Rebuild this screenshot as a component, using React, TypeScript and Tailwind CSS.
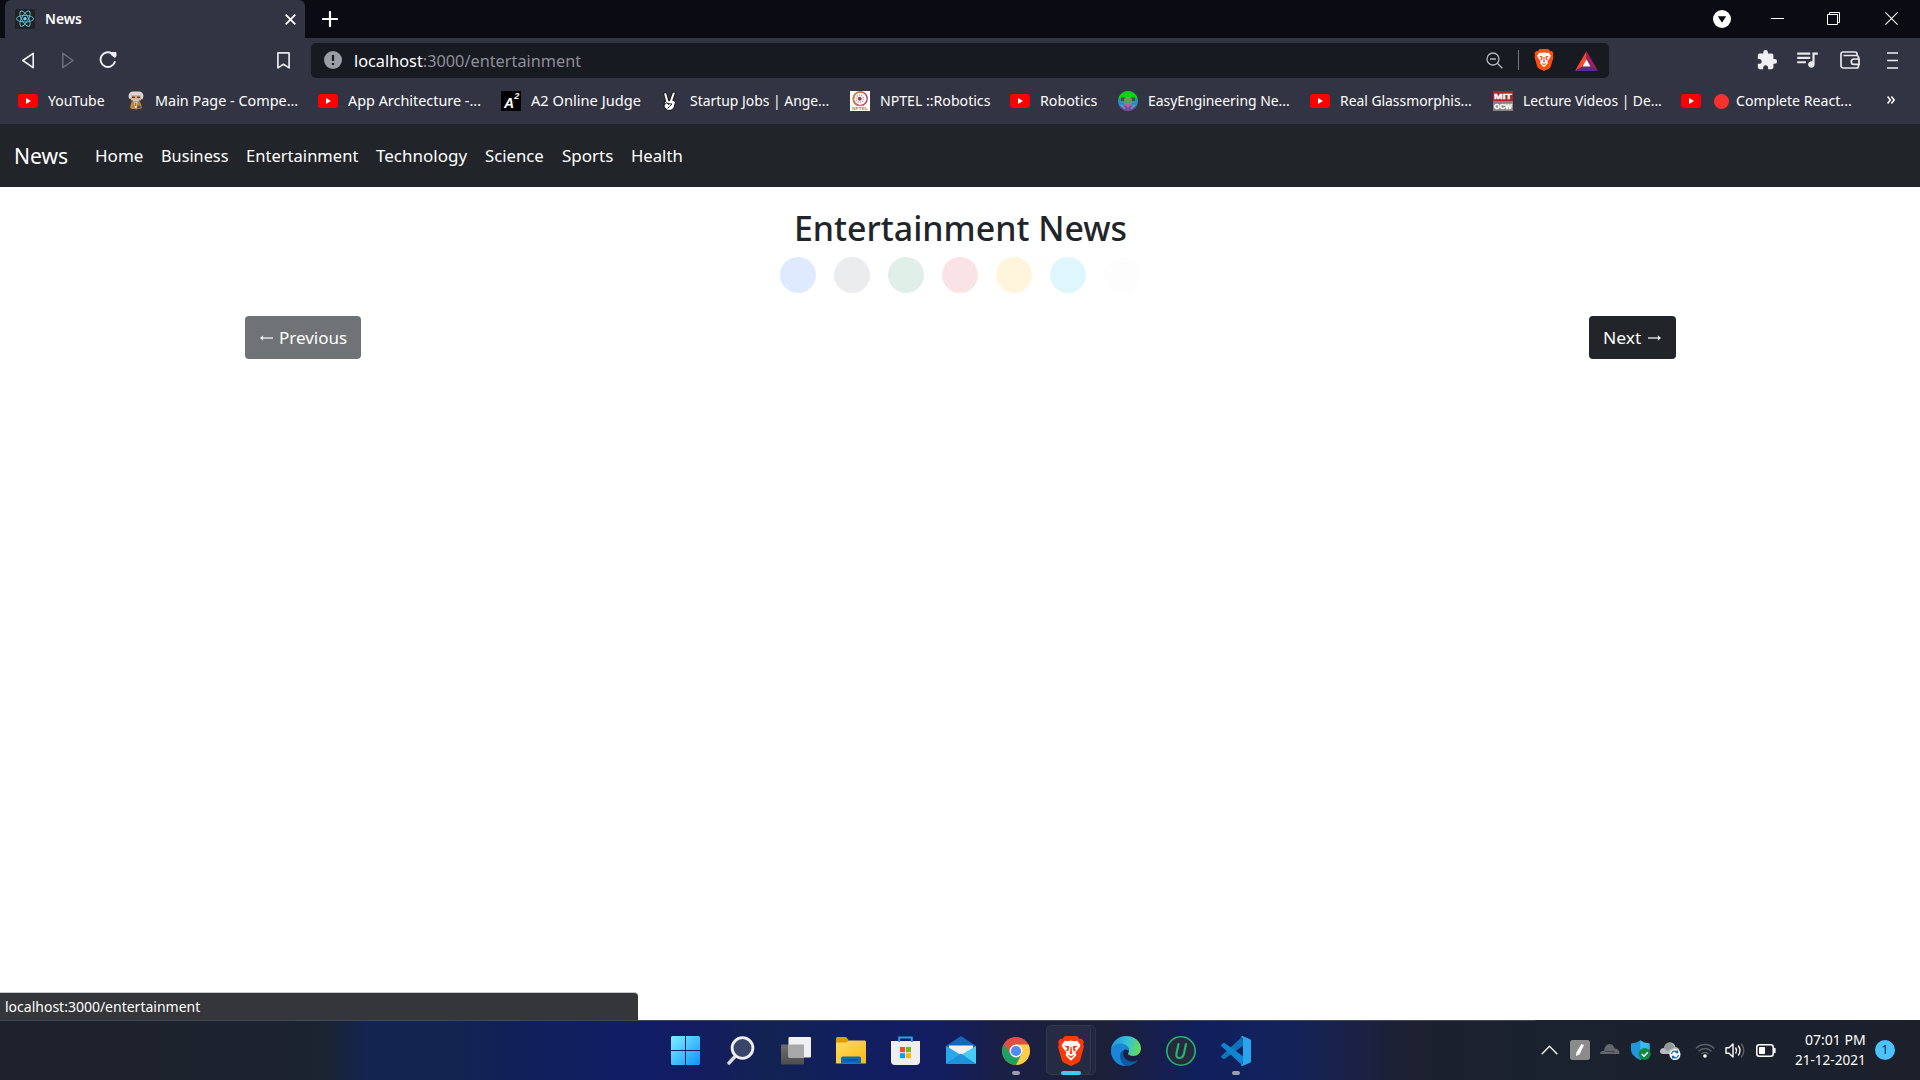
import React, { useLayoutEffect, useRef, useState } from "react";
import { MdExtension, MdQueueMusic } from "react-icons/md";

/** Single line of text stretched or condensed to an exact width. */
function Fit({ w, className = "", children }: { w: number; className?: string; children: React.ReactNode }) {
  const ref = useRef<HTMLSpanElement>(null);
  const [scale, setScale] = useState(1);
  useLayoutEffect(() => {
    // offsetWidth ignores transforms, so this is always the natural width
    if (ref.current && ref.current.offsetWidth) setScale(w / ref.current.offsetWidth);
  }, [w]);
  return (
    <span className={"block shrink-0 whitespace-nowrap " + className} style={{ width: w }}>
      <span ref={ref} className="inline-block origin-left" style={{ transform: `scaleX(${scale})` }}>
        {children}
      </span>
    </span>
  );
}

function ReactTabIcon() {
  return (
    <svg width="20" height="20" viewBox="0 0 20 20" className="shrink-0">
      <rect width="20" height="20" rx="1.5" fill="#222" />
      <g fill="none" stroke="#5bc4de" strokeWidth="0.9">
        <ellipse cx="10" cy="9.7" rx="8.6" ry="3.3" />
        <ellipse cx="10" cy="9.7" rx="8.6" ry="3.3" transform="rotate(60 10 9.7)" />
        <ellipse cx="10" cy="9.7" rx="8.6" ry="3.3" transform="rotate(120 10 9.7)" />
      </g>
      <circle cx="10" cy="9.7" r="1.7" fill="#61dafb" />
    </svg>
  );
}

function TabStrip() {
  return (
    <div className="flex h-[38px] bg-[#0b0b14] pl-[5px]">
      <div className="flex w-[300px] items-center rounded-t-[6px] bg-[#323443] pl-[10px] text-white">
        <ReactTabIcon />
        <Fit w={37} className="ml-[10px] pb-[2px] text-[14.5px] font-semibold leading-[20px]">News</Fit>
        <svg width="11" height="11" viewBox="0 0 11 11" className="ml-[203px]">
          <path d="M0.7 0.7 10.3 10.3M10.3 0.7 0.7 10.3" stroke="#fff" strokeWidth="1.8" />
        </svg>
      </div>
      <svg width="16" height="16" viewBox="0 0 16 16" className="ml-[17px] mt-[11px]">
        <path d="M8 1v14M1 8h14" stroke="#fff" strokeWidth="2.2" strokeLinecap="round" />
      </svg>
      <div className="ml-auto flex items-center pr-[22px]">
        <svg width="18" height="18" viewBox="0 0 18 18">
          <circle cx="9" cy="9" r="9" fill="#fff" />
          <path d="M4.8 6.2h8.4L9 12.8z" fill="#0b0b14" />
        </svg>
        <svg width="13" height="13" viewBox="0 0 13 13" className="-mt-px ml-[40px]">
          <path d="M0 6.5h13" stroke="#fff" />
        </svg>
        <svg width="13" height="13" viewBox="0 0 13 13" className="-mt-px ml-[43px]">
          <path d="M0.5 2.5h10v10h-10zM2.5 2.5v-2h10v10h-2" stroke="#fff" fill="none" />
        </svg>
        <svg width="13" height="13" viewBox="0 0 13 13" className="-mt-px ml-[45px]">
          <path d="M0.4 0.4 12.6 12.6M12.6 0.4 0.4 12.6" stroke="#fff" strokeWidth="1.1" />
        </svg>
      </div>
    </div>
  );
}

/** Brave lion: orange shield with a white face. */
function BraveLogo({ className, color }: { className: string; color: string }) {
  return (
    <svg viewBox="0 0 26 30" className={className}>
      <path d="M7 0h12l2.6 3 2.2-.3L26 6l-.9 2.5.8 2.3-3.4 12.4c-.5 1.8-1.5 2.8-3 3.9L13 30l-6.5-2.9c-1.5-1.1-2.5-2.1-3-3.9L.1 10.8.9 8.5 0 6l2.2-3.3 2.2.3z" fill={color} />
      <path d="M13 4.6 9.5 5.3 6.8 4.7 3.6 9l.8 2.2 4 5-.7 3 1.2 1.6L13 24.8l4.1-4 1.2-1.6-.7-3 4-5 .8-2.2-3.2-4.3-2.7.6z" fill="#fff" />
      <path d="M6 9.7 10.7 10l.5 1-.8 4.5L8 14.5 9.5 12.2zM20 9.7 15.3 10l-.5 1 .8 4.5 2.4-1L16.5 12.2zM9.3 18.5 13 20.3l3.7-1.8-2.9 3.2h-1.6zM12.4 11h1.2l.3 5.2 1 .8L13 18.3 11.1 17l1-.8z" fill={color} />
    </svg>
  );
}

function Toolbar() {
  return (
    <div className="flex h-[44px] items-center bg-[#323443] pl-[21px]">
      <svg width="13" height="17" viewBox="0 0 13 17">
        <path d="M12.2 1.3v14.4L1.8 8.5z" fill="none" stroke="#f2f2f4" strokeWidth="1.6" strokeLinejoin="round" />
      </svg>
      <svg width="12" height="17" viewBox="0 0 12 17" className="ml-[28px]">
        <path d="M.8 1.3v14.4L11 8.5z" fill="none" stroke="#6c6e7a" strokeWidth="1.5" strokeLinejoin="round" />
      </svg>
      <svg width="19" height="18" viewBox="0 0 19 18" className="ml-[25px]">
        <path d="M13 2.6A7.3 7.3 0 1 0 15.8 11" fill="none" stroke="#f2f2f4" strokeWidth="1.9" strokeLinecap="round" />
        <path d="M12 1.5h5v3.2a1.5 1.5 0 0 1-1.6 1.5L12 3.5z" fill="#f2f2f4" stroke="#f2f2f4" strokeLinejoin="round" />
      </svg>
      <svg width="13" height="17" viewBox="0 0 13 17" className="ml-[159px]">
        <path d="M.9.9h11.2v15L6.5 12.3.9 15.9z" fill="none" stroke="#e9e9ec" strokeWidth="1.7" strokeLinejoin="round" />
      </svg>
      <div className="ml-[21px] flex h-[35px] w-[1298px] shrink-0 items-center rounded-[5px] bg-[#181a21] pl-[13px]">
        <svg width="18" height="18" viewBox="0 0 18 18">
          <circle cx="9" cy="9" r="9" fill="#9a9ca6" />
          <path d="M9 4v6M9 12v2" stroke="#181a21" strokeWidth="2.2" />
        </svg>
        <Fit w={227} className="ml-[12px] text-[17px] leading-[35px] text-[#8d8f98]">
          <span className="text-white">localhost</span>:3000/entertainment
        </Fit>
        <svg width="17" height="17" viewBox="0 0 17 17" className="ml-[905px]">
          <g fill="none" stroke="#b4b5bb" strokeWidth="1.3">
            <circle cx="7" cy="7" r="6" />
            <path d="M4 7h6M11.3 11.3 16.3 16.3" />
          </g>
        </svg>
        <div className="ml-[15px] h-[20px] w-px bg-[#777984]" />
        <BraveLogo className="ml-[15px] h-[22px] w-[20px]" color="#fb5108" />
        <svg width="23" height="20" viewBox="0 0 23 20" className="ml-[21px] mt-px">
          <path d="M11.5 0 0 20l7.5-4.5 4-7.2z" fill="#ff4724" />
          <path d="M11.5 0 23 20l-7.5-4.5-4-7.2z" fill="#9e1f63" />
          <path d="M0 20h23l-7.5-4.5h-8z" fill="#5b2a8c" />
          <path d="M11.5 8.3 15.5 15.5h-8z" fill="#fff" />
        </svg>
      </div>
      <MdExtension className="ml-[147px] size-[22px] text-[#f0f0f2]" />
      <MdQueueMusic className="-mt-[2px] ml-[16px] size-[26px] text-[#e9e9ec]" />
      <svg width="20" height="18" viewBox="0 0 20 18" className="ml-[20px]">
        <g fill="none" stroke="#e9e9ec" strokeWidth="1.7">
          <path d="M17 4.5V3a2 2 0 0 0-2-2H3a2 2 0 0 0-2 2v11.5A2.3 2.3 0 0 0 3.3 17H16.5a2 2 0 0 0 2-2V6.5a2 2 0 0 0-2-2H3.5" />
          <path d="M19 8h-5a2.7 2.7 0 0 0 0 5.4h5z" fill="#323443" />
        </g>
      </svg>
      <svg width="11" height="17" viewBox="0 0 11 17" className="ml-[27px]">
        <path d="M0 1h11M0 8.5h11M0 16h11" stroke="#f0f0f2" strokeWidth="1.7" />
      </svg>
    </div>
  );
}

function YouTubeIcon() {
  return (
    <svg width="20" height="20" viewBox="0 0 20 20" className="shrink-0">
      <rect y="3" width="20" height="14" rx="3.2" fill="#f00" />
      <path d="M8 7v6l5-3z" fill="#fff" />
    </svg>
  );
}

function ProfessorIcon() {
  return (
    <svg width="20" height="20" viewBox="0 0 20 20">
      <path d="M3.5 5Q4 .5 8 .5h6q4 0 4.5 4.5l-1 3.5-1.5-.5V4.5H6V8l-2-.5z" fill="#d8d6d0" />
      <rect x="6" y="4" width="10" height="5.5" fill="#e0ab86" />
      <path d="M7 5.5h3V7H7zM12 5.5h3V7h-3z" fill="#55463c" />
      <path d="M7 8h8l-1.5 3H8.5z" fill="#c9c5bd" />
      <path d="M6.5 10.5H15l2 6-2 2H7l-2-2z" fill="#b98a3c" />
      <path d="M9.3 11h3l-.8 6H10z" fill="#ece6dc" />
      <path d="M10.3 11.5h1V15h-1z" fill="#a3222a" />
      <path d="M12.5 14.5h3v3h-3z" fill="#46477c" />
      <path d="M6.5 18h4v1.5h-4zM12 18h4v1.5h-4z" fill="#4a352a" />
    </svg>
  );
}

function A2Icon() {
  return (
    <span className="flex size-[20px] items-start bg-black pl-[3px] font-['Liberation_Sans',sans-serif] font-bold italic text-white">
      <span className="mt-[6px] text-[14px] leading-[13px]">A</span>
      <span className="mt-[1px] text-[9px] leading-[9px]">2</span>
    </span>
  );
}

function PeaceIcon() {
  return (
    <svg width="20" height="20" viewBox="0 0 20 20">
      <g stroke="#111" strokeWidth="3.6" strokeLinecap="round">
        <path d="M7.5 10 5.3 3M11 9.5l2.7-7" />
      </g>
      <path d="M4.5 10.5 13 9l2.5 2-1.5 6-3 2.3H7.5L4 16z" fill="#fff" stroke="#111" />
      <path d="M7.5 11 5.3 3M10.8 10.5l2.9-8" stroke="#fff" strokeWidth="2.1" strokeLinecap="round" />
      <path d="M4.5 13.5l2.5-2 2 2.5M7 12.5l5 .5-2.5 2.5-2 2" stroke="#111" fill="none" strokeWidth=".9" />
    </svg>
  );
}

function NptelIcon() {
  return (
    <svg width="20" height="20" viewBox="0 0 20 20">
      <rect width="20" height="20" fill="#fff" />
      <circle cx="10.3" cy="7.7" r="6.9" fill="none" stroke="#c2355a" strokeWidth="1.3" />
      <path d="M13 1.7A6.9 6.9 0 1 0 13.5 14" fill="none" stroke="#cf8448" strokeWidth="1.6" />
      <circle cx="9.8" cy="7.7" r="3.7" fill="none" stroke="#c08996" strokeWidth="1.6" strokeDasharray="1 1.3" />
      <circle cx="9.8" cy="7.7" r="2" fill="#a6405d" />
      <rect y="15" width="20" height="5" fill="#fff" />
      <text x="2" y="18.9" fontSize="4.4" fontWeight="700" textLength="16" lengthAdjust="spacingAndGlyphs" fill="#c97b2f" fontFamily="Liberation Sans">NPTEL</text>
    </svg>
  );
}

function EasyIcon() {
  return (
    <svg width="20" height="20" viewBox="0 0 20 20">
      <clipPath id="easy"><circle cx="10" cy="10" r="10" /></clipPath>
      <g clipPath="url(#easy)">
        <rect width="20" height="20" fill="#2595bd" />
        <path d="M0 15h20v5H0z" fill="#7a4b9c" />
        <path d="M0 0h20v7.5H0z" fill="#0bd40f" />
        <path d="M3 6.5h4V10H3zM13 6.5h4V10h-4z" fill="#255f3c" />
        <circle cx="10" cy="10" r="4" fill="#8e8b62" />
        <circle cx="10" cy="10" r="2.3" fill="#27bd55" />
        <path d="M7 13l3 4 3-4z" fill="#c05f8b" />
        <path d="M3 14l4 3.5M17 14l-4 3.5" stroke="#30b8dc" strokeWidth="1.5" />
      </g>
    </svg>
  );
}

function MitIcon() {
  return (
    <svg width="20" height="20" viewBox="0 0 20 20" fontFamily="Liberation Sans" fontWeight="700" fill="#fff" stroke="#fff" strokeWidth=".4">
      <rect width="20" height="10" fill="#b5202a" stroke="none" />
      <rect y="10" width="20" height="10" fill="#86837c" stroke="none" />
      <text x="1" y="8" fontSize="8" textLength="18" lengthAdjust="spacingAndGlyphs">MIT</text>
      <text x="1" y="17.8" fontSize="8" textLength="18" lengthAdjust="spacingAndGlyphs">OCW</text>
    </svg>
  );
}

const bookmarks = [
  { icon: <YouTubeIcon />, label: "YouTube", text: 57, cell: 107 },
  { icon: <ProfessorIcon />, label: "Main Page - Compe...", text: 143, cell: 193 },
  { icon: <YouTubeIcon />, label: "App Architecture -...", text: 133, cell: 183 },
  { icon: <A2Icon />, label: "A2 Online Judge", text: 110, cell: 159 },
  { icon: <PeaceIcon />, label: "Startup Jobs | Ange...", text: 139, cell: 190 },
  { icon: <NptelIcon />, label: "NPTEL ::Robotics", text: 110, cell: 160 },
  { icon: <YouTubeIcon />, label: "Robotics", text: 57, cell: 108 },
  { icon: <EasyIcon />, label: "EasyEngineering Ne...", text: 142, cell: 192 },
  { icon: <YouTubeIcon />, label: "Real Glassmorphis...", text: 132, cell: 183 },
  { icon: <MitIcon />, label: "Lecture Videos | De...", text: 139, cell: 188 },
];

function BookmarksBar() {
  return (
    <div className="flex h-[42px] items-center bg-[#323443] pb-[4px] pl-[18px] text-[14.5px] leading-[20px] text-white">
      {bookmarks.map((b, i) => (
        <div key={i} className="flex shrink-0 items-center gap-[10px]" style={{ width: b.cell }}>
          {b.icon}
          <Fit w={b.text} className="-mt-[2px]">{b.label}</Fit>
        </div>
      ))}
      <YouTubeIcon />
      <span className="ml-[13px] size-[15px] rounded-full bg-[#f8312f]" />
      <Fit w={116} className="-mt-[2px] ml-[7px]">Complete React...</Fit>
      <svg width="8" height="8" viewBox="0 0 8 8" className="-mt-[2px] ml-[35px]">
        <path d="M.6.5 3.4 4 .6 7.5M4.4.5 7.2 4 4.4 7.5" fill="none" stroke="#fff" strokeWidth="1.5" />
      </svg>
    </div>
  );
}

const links = [
  { label: "Home", w: 48 },
  { label: "Business", w: 67 },
  { label: "Entertainment", w: 112 },
  { label: "Technology", w: 91 },
  { label: "Science", w: 59 },
  { label: "Sports", w: 51 },
  { label: "Health", w: 52 },
];

function NavBar() {
  return (
    <nav className="flex h-[63px] items-center bg-[#212529] pl-[14px] text-white">
      <Fit w={54} className="text-[21.5px] leading-[30px]">News</Fit>
      <div className="ml-[27px] flex gap-[18px] text-[17px] leading-[28px]">
        {links.map((l) => (
          <Fit key={l.label} w={l.w}>{l.label}</Fit>
        ))}
      </div>
    </nav>
  );
}

const dots = ["bg-[#deeaff]", "bg-[#ebecee]", "bg-[#e0efe7]", "bg-[#fae3e5]", "bg-[#fff5dc]", "bg-[#def7fd]", "bg-[#fdfdfd]"];

function NewsPage() {
  return (
    <main className="flex h-[833px] flex-col bg-white">
      <h2 className="mt-[20px] flex justify-center font-medium text-[#212529]">
        <Fit w={333} className="text-[35px] leading-[42px]">Entertainment News</Fit>
      </h2>
      <div className="mt-[8px] flex justify-center gap-[18px]">
        {dots.map((c) => (
          <span key={c} className={"size-[36px] rounded-full " + c} />
        ))}
      </div>
      <div className="mt-[23px] flex justify-between pl-[245px] pr-[244px] text-[17px] text-white">
        <button className="flex h-[43px] w-[116px] items-center rounded-[4px] bg-[#6f7376] pl-[15px]">
          <Arrow flip />
          <Fit w={68} className="ml-[6px] text-left leading-[42px]">Previous</Fit>
        </button>
        <button className="flex h-[43px] w-[87px] items-center rounded-[4px] bg-[#212529] pl-[14px]">
          <Fit w={38} className="text-left leading-[42px]">Next</Fit>
          <Arrow />
        </button>
      </div>
      <div className="mt-auto h-[28px] w-[638px] rounded-tr-[4px] border-t border-[#c9cacc] bg-[#35363a] pl-[5px] text-[14.5px] leading-[26px] text-white">
        <Fit w={195}>localhost:3000/entertainment</Fit>
      </div>
    </main>
  );
}

function Arrow({ flip = false }: { flip?: boolean }) {
  return (
    <svg width="13" height="8" viewBox="0 0 13 8" className={flip ? "-scale-x-100" : "ml-[7px]"}>
      <path d="M0 4h11.5" stroke="#fff" strokeWidth="1.2" />
      <path d="M9.7 1.3 13 4 9.7 6.7l.6-2.7z" fill="#fff" />
    </svg>
  );
}

function StartIcon() {
  return (
    <svg width="29" height="29" viewBox="0 0 29 29">
      <linearGradient id="win" x1="0" y1="0" x2="29" y2="29" gradientUnits="userSpaceOnUse">
        <stop offset="0" stopColor="#7df0ff" />
        <stop offset="1" stopColor="#0f93f7" />
      </linearGradient>
      <path d="M1 0h13v14H0V1zM15 0h13l1 1v13H15zM0 15h14v14H1l-1-1zM15 15h14v13l-1 1H15z" fill="url(#win)" />
    </svg>
  );
}

function SearchIcon() {
  return (
    <svg width="28" height="29" viewBox="0 0 28 29">
      <path d="M9 19.5 2 27" stroke="#d9dade" strokeWidth="3.4" strokeLinecap="round" />
      <circle cx="15.5" cy="12" r="10.4" fill="#3a4669" stroke="#eff0f3" strokeWidth="2.8" />
    </svg>
  );
}

function TaskViewIcon() {
  return (
    <svg width="30" height="29" viewBox="0 0 30 29">
      <linearGradient id="tv" x1="0" y1="0" x2="0" y2="1">
        <stop offset="0" stopColor="#6e6e6e" />
        <stop offset="1" stopColor="#4d4d4d" />
      </linearGradient>
      <rect y="8.5" width="23" height="20" rx="1" fill="url(#tv)" />
      <rect x="7.5" y="1" width="22.5" height="20.5" rx="1" fill="#f1f1f3" />
      <path d="M7.5 8.5H23v13H7.5z" fill="#a8a8aa" />
    </svg>
  );
}

function FolderIcon() {
  return (
    <svg width="30" height="29" viewBox="0 0 30 29">
      <linearGradient id="fold" x1="0" y1="0" x2="1" y2="1">
        <stop offset="0" stopColor="#ffdc63" />
        <stop offset="1" stopColor="#f8b818" />
      </linearGradient>
      <path d="M1 1h9l2.5 3V8H0V2z" fill="#e09a05" />
      <path d="M0 6.5h10L13 4.5h16l1 1V27.5H0z" fill="url(#fold)" />
      <path d="M5 27.5V22q0-1.5 1.5-1.5h17Q25 20.5 25 22v5.5z" fill="#0c6bbb" />
      <path d="M8.5 24h13" stroke="#084a8c" strokeWidth="1.2" />
    </svg>
  );
}

function StoreIcon() {
  return (
    <svg width="29" height="30" viewBox="0 0 29 30">
      <path d="M0 5h29v20q0 4-4 4H4q-4 0-4-4z" fill="#efeff0" />
      <path d="M8.2 6V1.5h12.6V6" fill="none" stroke="#23a4e4" strokeWidth="2" />
      <path d="M9 11h5v5.2H9z" fill="#f05023" />
      <path d="M15 11h5v5.2h-5z" fill="#7cb900" />
      <path d="M9 17.2h5v5H9z" fill="#00a2ed" />
      <path d="M15 17.2h5v5h-5z" fill="#fdb800" />
    </svg>
  );
}

function MailIcon() {
  return (
    <svg width="30" height="29" viewBox="0 0 30 29">
      <path d="M0 10 15 0 30 10v5H0z" fill="#0f68ba" />
      <path d="M3 9.5h24V18l-12 4L3 18z" fill="#f1f0ef" />
      <path d="M0 10 15 19 0 28z" fill="#2aa7e8" />
      <path d="M30 10 15 19 30 28z" fill="#45cdf6" />
      <path d="M0 28 15 17.5 30 28z" fill="#1e93dd" />
    </svg>
  );
}

function ChromeIcon() {
  return (
    <svg width="28" height="28" viewBox="0 0 28 28">
      <circle cx="14" cy="14" r="14" fill="#dd5144" />
      <path d="M1.9 7A14 14 0 0 0 14 28l5.6-11L8.4 17z" fill="#1ca261" />
      <path d="M26.4 7.6H14V14l5.6 3L14 28A14 14 0 0 0 26.4 7.6z" fill="#ffcd46" />
      <circle cx="14" cy="14" r="6.5" fill="#f4f4f4" />
      <circle cx="14" cy="14" r="5.1" fill="#4f8cf3" />
    </svg>
  );
}

function EdgeIcon() {
  return (
    <svg width="30" height="30" viewBox="0 0 30 30">
      <linearGradient id="edgeTop" x1="0" y1=".3" x2="1" y2=".5">
        <stop offset="0" stopColor="#1f95dd" />
        <stop offset=".5" stopColor="#34c1dc" />
        <stop offset="1" stopColor="#65dd57" />
      </linearGradient>
      <path d="M0 15a15 15 0 0 0 15 15c5 0 9-2 12-6-4 2-8 2-11 0-4-3-5-7-2-11z" fill="#0c59a4" />
      <path d="M0 15c0-5 4-8 9-8 5 0 9 3 9 8-2-2-5-2-7 0-4 4-2 11 3 15A15 15 0 0 1 0 15z" fill="#1b86d9" />
      <path d="M0 14A15 15 0 0 1 15 0c9 0 15 6 15 12.5 0 4.5-3.5 7.5-7.5 7.5-3.5 0-5.5-1.2-5.5-2.3 0-.7 1-1 1-3.2C18 10.5 14 7.5 9.5 7.5 5 7.5 1 10 0 14z" fill="url(#edgeTop)" />
    </svg>
  );
}

function UninstallerIcon() {
  return (
    <svg width="30" height="30" viewBox="0 0 30 30">
      <circle cx="15" cy="15" r="14.2" fill="#272a3c" stroke="#22b573" strokeWidth="1.6" />
      <path d="M12.5 8 10.5 17.5q-.8 4.5 3 4.5 3.5 0 4.5-4.5L20 8" fill="none" stroke="#22b573" strokeWidth="2.2" strokeLinecap="round" />
    </svg>
  );
}

function CodeIcon() {
  return (
    <svg width="30" height="30" viewBox="0 0 30 30">
      <path d="M.5 19.8 21 1l2 8L4 22.7a1.5 1.5 0 0 1-2 0L.6 21.5a1.2 1.2 0 0 1-.1-1.7z" fill="#0f73ba" />
      <path d="M.5 10.2 21 29l2-8L4 7.3a1.5 1.5 0 0 0-2 0L.6 8.5a1.2 1.2 0 0 0-.1 1.7z" fill="#1285cf" />
      <path d="M21.5 0 29 3.3q1 .4 1 1.5v20.4q0 1.1-1 1.5L21.5 30q-1 .2-1.5-1l2-1.5v-25L20 1q.5-1.2 1.5-1z" fill="#2ba4ee" />
    </svg>
  );
}

const apps = [
  { icon: <StartIcon /> },
  { icon: <SearchIcon /> },
  { icon: <TaskViewIcon /> },
  { icon: <FolderIcon /> },
  { icon: <StoreIcon /> },
  { icon: <MailIcon /> },
  { icon: <ChromeIcon />, mark: "bg-[#9b9eae] w-[8px]" },
  { icon: <BraveLogo className="h-[30px] w-[26px]" color="#fb3a0c" />, mark: "bg-[#4cc2ff] w-[20px]", active: true },
  { icon: <EdgeIcon /> },
  { icon: <UninstallerIcon /> },
  { icon: <CodeIcon />, mark: "bg-[#9b9eae] w-[8px]" },
];

function Tray() {
  return (
    <div className="ml-auto flex items-center pb-px pr-[25px]">
      <svg width="17" height="10" viewBox="0 0 17 10">
        <path d="M.7 9.2 8.5 1.2l7.8 8" fill="none" stroke="#fff" strokeWidth="1.3" />
      </svg>
      <svg width="20" height="20" viewBox="0 0 20 20" className="ml-[12px]">
        <rect width="20" height="20" rx="2.5" fill="#8b8b8b" />
        <path d="M11.5 4 14 5 9.5 14.5 6 16l.5-3.8z" fill="#fff" />
      </svg>
      <svg width="20" height="12" viewBox="0 0 20 12" className="-mt-[3px] ml-[10px]">
        <path d="M0 11q0-3 4-3.2Q5 1 9.5 1q4 0 5 4.5 5 0 5 5.5z" fill="#63666c" />
        <path d="M5 8.5h9l-1 1.5" stroke="#40444b" fill="none" />
      </svg>
      <svg width="20" height="20" viewBox="0 0 20 20" className="ml-[11px]">
        <path d="M0 3.5Q6 3 9.3.3 12.5 3 18.5 3.5v6q0 6.5-9.2 10.5Q0 16 0 9.5z" fill="#2296dc" />
        <path d="M9.3.3Q12.5 3 18.5 3.5V10H9.3z" fill="#38b9ef" />
        <circle cx="13.7" cy="14" r="6" fill="#10893e" />
        <path d="m10.8 14 2.2 2.2 3.8-4" fill="none" stroke="#fff" strokeWidth="1.4" />
      </svg>
      <svg width="21" height="20" viewBox="0 0 21 20" className="ml-[9px]">
        <path d="M0 11.5Q0 8 4 8q1-5.5 6-5.5 4.5 0 5.5 4.5 4 .5 4 4.5v2.5H3q-3 0-3-2.5z" fill="#b7b9bd" />
        <path d="M4 8q1-5.5 6-5.5L15 7l-8 4z" fill="#93969b" />
        <circle cx="15" cy="14.5" r="5.5" fill="#fff" />
        <path d="M11.5 14a3.5 3.5 0 0 1 6-1.8V10.5M18.5 15a3.5 3.5 0 0 1-6 1.8V18.5M17.5 12.5h-2M12.5 16.5h2" fill="none" stroke="#0d63c0" strokeWidth="1.3" />
      </svg>
      <svg width="20" height="16" viewBox="0 0 20 16" className="ml-[14px]">
        <g fill="none" stroke="#5b6069" strokeWidth="1.5">
          <path d="M.8 6.5a12.5 12.5 0 0 1 18.4 0M3.5 9.3a9 9 0 0 1 13 0M6.4 12a5 5 0 0 1 7.2 0" />
        </g>
        <circle cx="10" cy="14" r="1.8" fill="#fff" />
      </svg>
      <svg width="21" height="17" viewBox="0 0 21 17" className="ml-[10px]">
        <g fill="none" stroke="#fff" strokeWidth="1.4" strokeLinejoin="round" strokeLinecap="round">
          <path d="M1 5.8h3L8 2v13l-4-3.8H1z" />
          <path d="M10.8 6q1.6 2.5 0 5M13.5 4q3 4.5 0 9" />
          <path d="M16.5 2q4.5 6.5 0 13" stroke="#5b6069" />
        </g>
      </svg>
      <svg width="20" height="13" viewBox="0 0 20 13" className="ml-[10px]">
        <rect x=".8" y=".8" width="16.4" height="11.4" rx="2.5" fill="none" stroke="#fff" strokeWidth="1.5" />
        <rect x="3" y="3" width="6" height="7" rx=".8" fill="#fff" />
        <path d="M18.8 4.5v4" stroke="#fff" strokeWidth="1.6" strokeLinecap="round" />
      </svg>
      <div className="-mt-[3px] ml-[19px] flex flex-col items-end text-[14.5px] leading-[20px] text-white">
        <Fit w={61}>07:01 PM</Fit>
        <Fit w={71}>21-12-2021</Fit>
      </div>
      <span className="ml-[9px] flex size-[20px] items-center justify-center rounded-full bg-[#4cc2ff] text-[12px] leading-none text-[#10222e]">1</span>
    </div>
  );
}

function Taskbar() {
  return (
    <footer className="flex h-[60px] flex-col bg-[linear-gradient(90deg,#1f222c_0,#1b222d_260px,#1b2430_325px,#12244f_365px,#122450_450px,#111f5c_540px,#111d66_650px,#141c60_700px,#122352_770px,#111e60_860px,#121d60_940px,#1a1f46_1000px,#1c2036_1100px,#171e4a_1150px,#101f5e_1200px,#12235a_1290px,#1a2148_1345px,#1c2030_1410px,#1a222e_1560px,#1b202b_1920px)]">
      <div className="h-px w-[1535px] bg-[#434956]" />
      <div className="flex flex-1 items-stretch pl-[658px]">
        {apps.map((a, i) => (
          <div key={i} className="relative flex w-[55px] items-center justify-center">
            {a.active && (
              <>
                <span className="absolute left-[10px] top-[4px] h-[50px] w-[43px] rounded-[5px] border border-[#2f334c] bg-[#22263f]" />
                <span className="absolute left-[3px] top-[4px] h-[50px] w-[45px] rounded-[5px] border border-[#34384f] bg-[#262a42]" />
              </>
            )}
            <span className="relative">{a.icon}</span>
            {a.mark && <span className={"absolute bottom-[5px] h-[4px] rounded-full " + a.mark} />}
          </div>
        ))}
        <Tray />
      </div>
    </footer>
  );
}

export default function App() {
  return (
    <div className="flex h-[1080px] w-[1920px] flex-col overflow-hidden bg-white font-['Noto_Sans',sans-serif]">
      <TabStrip />
      <Toolbar />
      <BookmarksBar />
      <NavBar />
      <NewsPage />
      <Taskbar />
    </div>
  );
}
